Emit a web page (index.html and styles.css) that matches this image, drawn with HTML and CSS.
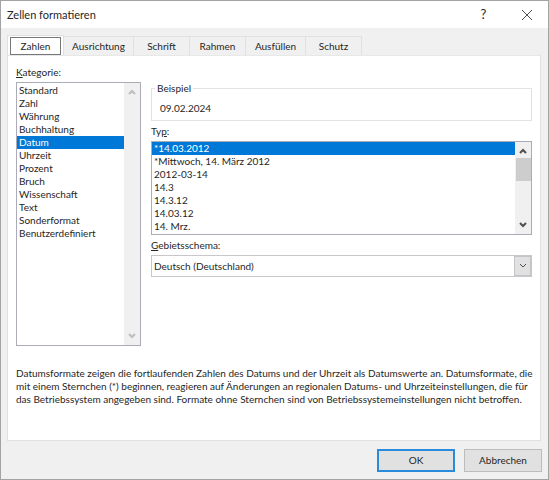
FILE: index.html
```html
<!DOCTYPE html>
<html lang="de">

<head>
    <meta charset="UTF-8">
    <meta name="viewport" content="width=device-width, initial-scale=1.0">
    <title>Zellen formatieren</title>
    <link rel="stylesheet" href="styles.css">
</head>

<body>
    <div class="dialog">
        <header class="titlebar">
            <h1>Zellen formatieren</h1>
            <button class="title-btn" aria-label="Hilfe">?</button>
            <button class="title-btn" aria-label="Schließen">
                <svg width="10" height="10" viewBox="0 0 10 10"><path d="M0 0L10 10M10 0L0 10"/></svg>
            </button>
        </header>

        <nav class="tabs" role="tablist">
            <button class="tab active" role="tab"><span>Zahlen</span></button>
            <button class="tab wide" role="tab">Ausrichtung</button>
            <button class="tab" role="tab">Schrift</button>
            <button class="tab" role="tab">Rahmen</button>
            <button class="tab medium" role="tab">Ausfüllen</button>
            <button class="tab" role="tab">Schutz</button>
        </nav>

        <main class="panel">
            <div class="columns">
                <div class="category">
                    <label for="category"><u>K</u>ategorie:</label>
                    <div class="listbox category-list">
                        <select id="category" size="12">
                            <option>Standard</option>
                            <option>Zahl</option>
                            <option>Währung</option>
                            <option>Buchhaltung</option>
                            <option selected>Datum</option>
                            <option>Uhrzeit</option>
                            <option>Prozent</option>
                            <option>Bruch</option>
                            <option>Wissenschaft</option>
                            <option>Text</option>
                            <option>Sonderformat</option>
                            <option>Benutzerdefiniert</option>
                        </select>
                        <div class="scrollbar disabled">
                            <svg width="8" height="6" viewBox="0 0 8 6"><path d="M1 5L4 2L7 5"/></svg>
                            <svg width="8" height="6" viewBox="0 0 8 6"><path d="M1 1L4 4L7 1"/></svg>
                        </div>
                    </div>
                </div>

                <div class="settings">
                    <fieldset class="sample">
                        <legend>Beispiel</legend>
                        <output>09.02.2024</output>
                    </fieldset>

                    <label for="type">Ty<u>p</u>:</label>
                    <div class="listbox type-list">
                        <select id="type" size="7">
                            <option selected>*14.03.2012</option>
                            <option>*Mittwoch, 14. März 2012</option>
                            <option>2012-03-14</option>
                            <option>14.3</option>
                            <option>14.3.12</option>
                            <option>14.03.12</option>
                            <option>14. Mrz.</option>
                        </select>
                        <div class="scrollbar">
                            <svg width="8" height="6" viewBox="0 0 8 6"><path d="M1 5L4 2L7 5"/></svg>
                            <div class="thumb"></div>
                            <svg width="8" height="6" viewBox="0 0 8 6"><path d="M1 1L4 4L7 1"/></svg>
                        </div>
                    </div>

                    <label for="locale"><u>G</u>ebietsschema:</label>
                    <div class="dropdown">
                        <select id="locale">
                            <option>Deutsch (Deutschland)</option>
                        </select>
                        <span class="arrow">
                            <svg width="8" height="6" viewBox="0 0 8 6"><path d="M1 1L4 4L7 1"/></svg>
                        </span>
                    </div>
                </div>
            </div>

            <p class="hint">Datumsformate zeigen die fortlaufenden Zahlen des Datums und der Uhrzeit als Datumswerte an. Datumsformate, die mit einem Sternchen (*) beginnen, reagieren auf Änderungen an regionalen Datums- und Uhrzeiteinstellungen, die für das Betriebssystem angegeben sind. Formate ohne Sternchen sind von Betriebssystemeinstellungen nicht betroffen.</p>
        </main>

        <footer class="actions">
            <button class="btn primary">OK</button>
            <button class="btn">Abbrechen</button>
        </footer>
    </div>
</body>

</html>
```
FILE: styles.css
```css
* {
    box-sizing: border-box;
}

body {
    margin: 0;
    font-family: Lato, "Open Sans", sans-serif;
    font-size: 10px;
    line-height: 13px;
    color: #262626;
}

button,
select {
    font: inherit;
    color: inherit;
    margin: 0;
    border-radius: 0;
}

.dialog {
    display: flex;
    flex-direction: column;
    min-height: 100vh;
    background: #f0f0f0;
    border: 1px solid #a3a3a3;
}

/* Title bar */
.titlebar {
    display: flex;
    align-items: center;
    height: 27px;
    padding-left: 6px;
    background: #fff;
}

.titlebar h1 {
    flex: 1;
    margin: 0;
    font-size: 11px;
    font-weight: normal;
}

.title-btn {
    display: flex;
    align-items: center;
    justify-content: center;
    width: 43px;
    height: 27px;
    padding: 0;
    border: none;
    background: none;
    font-size: 13px;
}

svg {
    display: block;
    fill: none;
    stroke: #505050;
}

/* Tabs */
.tabs {
    display: flex;
    align-items: flex-end;
    padding: 7px 6px 0;
}

.tab {
    width: 56px;
    height: 19px;
    padding: 0;
    border: 1px solid #e0e0e0;
    border-width: 1px 1px 0 0;
    background: #f0f0f0;
}

.tab.wide {
    width: 70px;
}

.tab.medium {
    width: 60px;
}

.tab.active {
    width: 57px;
    height: 20px;
    padding: 1px 2px 0;
    border-left-width: 1px;
    background: #fff;
}

.tab.active span {
    display: block;
    height: 18px;
    border: 1px solid #777;
    line-height: 16px;
}

/* Panel */
.panel {
    flex: 1;
    margin: 0 7px 0 6px;
    padding: 11px 0 11px 8px;
    border: 1px solid #e0e0e0;
    border-top: none;
    background: #fff;
    box-shadow: inset 0 1px #e8e8e8;
}

.columns {
    display: flex;
    gap: 10px;
    padding-right: 8px;
}

.category {
    width: 125px;
}

.settings {
    flex: 1;
    min-width: 0;
    padding-top: 16px;
}

label {
    display: block;
    height: 16px;
}

u {
    text-underline-offset: 1px;
}

.listbox {
    display: flex;
    border: 1px solid #acacb8;
    background: #fff;
}

.category-list {
    height: 264px;
}

.type-list {
    height: 94px;
    margin-bottom: 4px;
}

.listbox select {
    flex: 1;
    min-width: 0;
    height: 100%;
    padding: 0;
    border: none;
    outline: none;
    overflow: hidden;
    background: #fff;
}

.category-list select {
    padding-top: 1px;
}

.listbox option {
    min-height: 13px;
    height: 13px;
    padding: 0 2px;
    line-height: 13px;
}

.listbox option:checked {
    background: linear-gradient(#0078d7, #0078d7);
    -webkit-text-fill-color: #fff;
}

.scrollbar {
    display: flex;
    flex-direction: column;
    align-items: center;
    justify-content: space-between;
    width: 16px;
    padding: 6px 0;
    background: #f0f0f0;
}

.scrollbar svg {
    stroke-width: 2;
}

.scrollbar.disabled svg {
    stroke: #bdbdbd;
}

.thumb {
    width: 15px;
    height: 23px;
    margin: 4px 0 auto;
    background: #cdcdcd;
}

.sample {
    height: 39px;
    margin: 0 0 4px;
    padding: 7px 8px 0;
    border: 1px solid #e2e2e2;
}

.sample legend {
    margin-left: -5px;
    padding: 0 2px;
}

.sample output {
    display: block;
}

.dropdown {
    position: relative;
}

.dropdown select {
    display: block;
    width: 100%;
    height: 22px;
    padding: 0 20px 0 2px;
    border: 1px solid #c8c8cc;
    background: #fff;
    appearance: none;
}

/* Lies over the right end of the select */
.dropdown .arrow {
    position: absolute;
    top: 1px;
    right: 1px;
    bottom: 1px;
    display: flex;
    align-items: center;
    justify-content: center;
    width: 17px;
    border: 1px solid #c4c4c8;
    background: #e1e1e1;
    pointer-events: none;
}

.hint {
    margin: 21px 0 0;
}

/* Buttons */
.actions {
    display: flex;
    justify-content: flex-end;
    gap: 9px;
    padding: 8px 6px 7px;
}

.btn {
    width: 78px;
    height: 23px;
    padding: 0;
    border: 1px solid #bcbcbc;
    background: #e1e1e1;
}

.btn.primary {
    border: 2px solid #2b8bdb;
}
```
